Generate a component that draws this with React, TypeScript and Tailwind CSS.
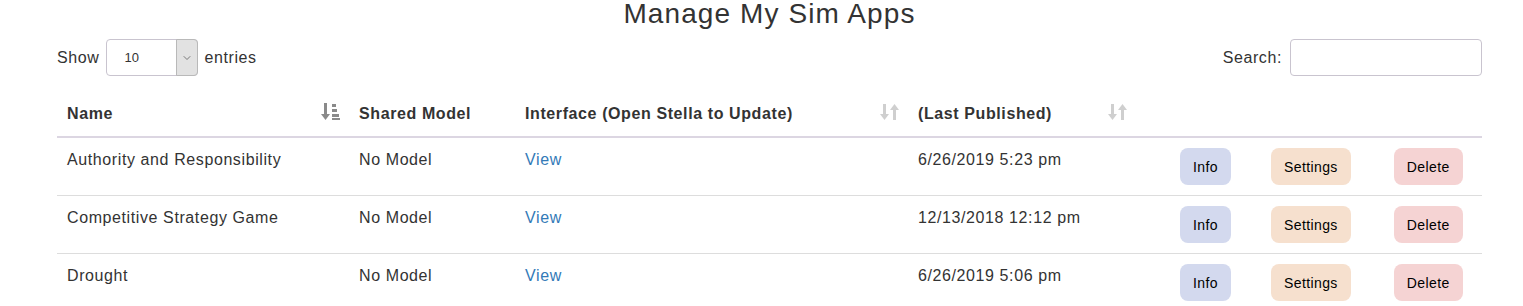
import { ChevronDown } from "lucide-react";

interface SimApp {
  name: string;
  model: string;
  published: string;
}

const apps: SimApp[] = [
  { name: "Authority and Responsibility", model: "No Model", published: "6/26/2019 5:23 pm" },
  { name: "Competitive Strategy Game", model: "No Model", published: "12/13/2018 12:12 pm" },
  { name: "Drought", model: "No Model", published: "6/26/2019 5:06 pm" },
];

const cols = "grid grid-cols-[292px_166px_393px_230px_1fr]";

// sorted (desc) icon for the active column
const SortDesc = () => (
  <svg width="19" height="20" viewBox="0 0 19 20" className="text-[#8a8a8a]" fill="currentColor">
    <rect x="3" y="1" width="3" height="13" />
    <path d="M0 12h9l-4.5 6z" />
    <rect x="11" y="2" width="4" height="3" />
    <rect x="11" y="7" width="5" height="3" />
    <rect x="11" y="12" width="7" height="3" />
    <rect x="11" y="16" width="8" height="2" />
  </svg>
);

// both-ways icon for unsorted columns
const SortBoth = () => (
  <svg width="20" height="20" viewBox="0 0 20 20" className="text-[#cfcfcf]" fill="currentColor">
    <rect x="3" y="2" width="3" height="12" />
    <path d="M0 12h9l-4.5 6z" />
    <rect x="13" y="6" width="3" height="12" />
    <path d="M10 8h9l-4.5-6z" />
  </svg>
);

const Btn = ({ label, className }: { label: string; className: string }) => (
  <button className={`h-[37px] rounded-[8px] px-[13px] text-[14px] tracking-[0.4px] text-black ${className}`}>
    {label}
  </button>
);

const App = () => {
  return (
    <div className="min-h-screen bg-white pl-[57px] pr-[41px] font-['Liberation_Sans',Arial,sans-serif] text-[16px] tracking-[0.6px] text-[#333]">
      <h1 className="text-center text-[28px] leading-[28px] tracking-[1.1px]">Manage My Sim Apps</h1>

      {/* controls */}
      <div className="mt-[11px] flex h-[37px] items-center justify-between">
        <label className="flex items-center">
          Show
          <div className="relative ml-[7px] mr-[6px] h-[37px] w-[92px]">
            <select className="h-full w-full appearance-none rounded-[4px] border border-[#c9c4cf] bg-white pl-[17px] text-[13px] tracking-normal outline-none">
              <option>10</option>
            </select>
            <div className="pointer-events-none absolute right-0 top-0 flex h-full w-[22px] items-center justify-center rounded-r-[4px] border border-[#b9b9b9] bg-[#e2e2e2]">
              <ChevronDown size={12} strokeWidth={1.5} className="text-[#555]" />
            </div>
          </div>
          entries
        </label>
        <label className="flex items-center">
          Search:
          <input className="ml-[8px] h-[37px] w-[192px] rounded-[4px] border border-[#c9c4cf] outline-none" />
        </label>
      </div>

      {/* table */}
      <div className="mt-[15px]">
        <div className={`${cols} border-b-2 border-[#dcd6e2] font-bold leading-[24px]`}>
          <div className="flex items-start justify-between pb-[10px] pl-[10px] pr-[9px] pt-[11px]">
            <span>Name</span>
            <SortDesc />
          </div>
          <div className="pb-[10px] pl-[10px] pt-[11px]">Shared Model</div>
          <div className="flex items-start justify-between pb-[10px] pl-[10px] pr-[8px] pt-[11px]">
            <span>Interface (Open Stella to Update)</span>
            <SortBoth />
          </div>
          <div className="flex items-start justify-between pb-[10px] pl-[10px] pr-[10px] pt-[11px]">
            <span>(Last Published)</span>
            <SortBoth />
          </div>
          <div />
        </div>

        {apps.map((app, i) => (
          <div key={i} className={`${cols} border-b border-[#dddddd] leading-[24px]`}>
            <div className="py-[10px] pl-[10px]">{app.name}</div>
            <div className="py-[10px] pl-[10px]">{app.model}</div>
            <div className="py-[10px] pl-[10px]">
              <a href="#" className="text-[#337ab7]">View</a>
            </div>
            <div className="py-[10px] pl-[10px]">{app.published}</div>
            <div className="flex py-[10px] pl-[42px]">
              <Btn label="Info" className="mr-[40px] bg-[#d3d9ee]" />
              <Btn label="Settings" className="mr-[43px] bg-[#f6e0ce]" />
              <Btn label="Delete" className="bg-[#f5d3d3]" />
            </div>
          </div>
        ))}
      </div>
    </div>
  );
};

export default App;
